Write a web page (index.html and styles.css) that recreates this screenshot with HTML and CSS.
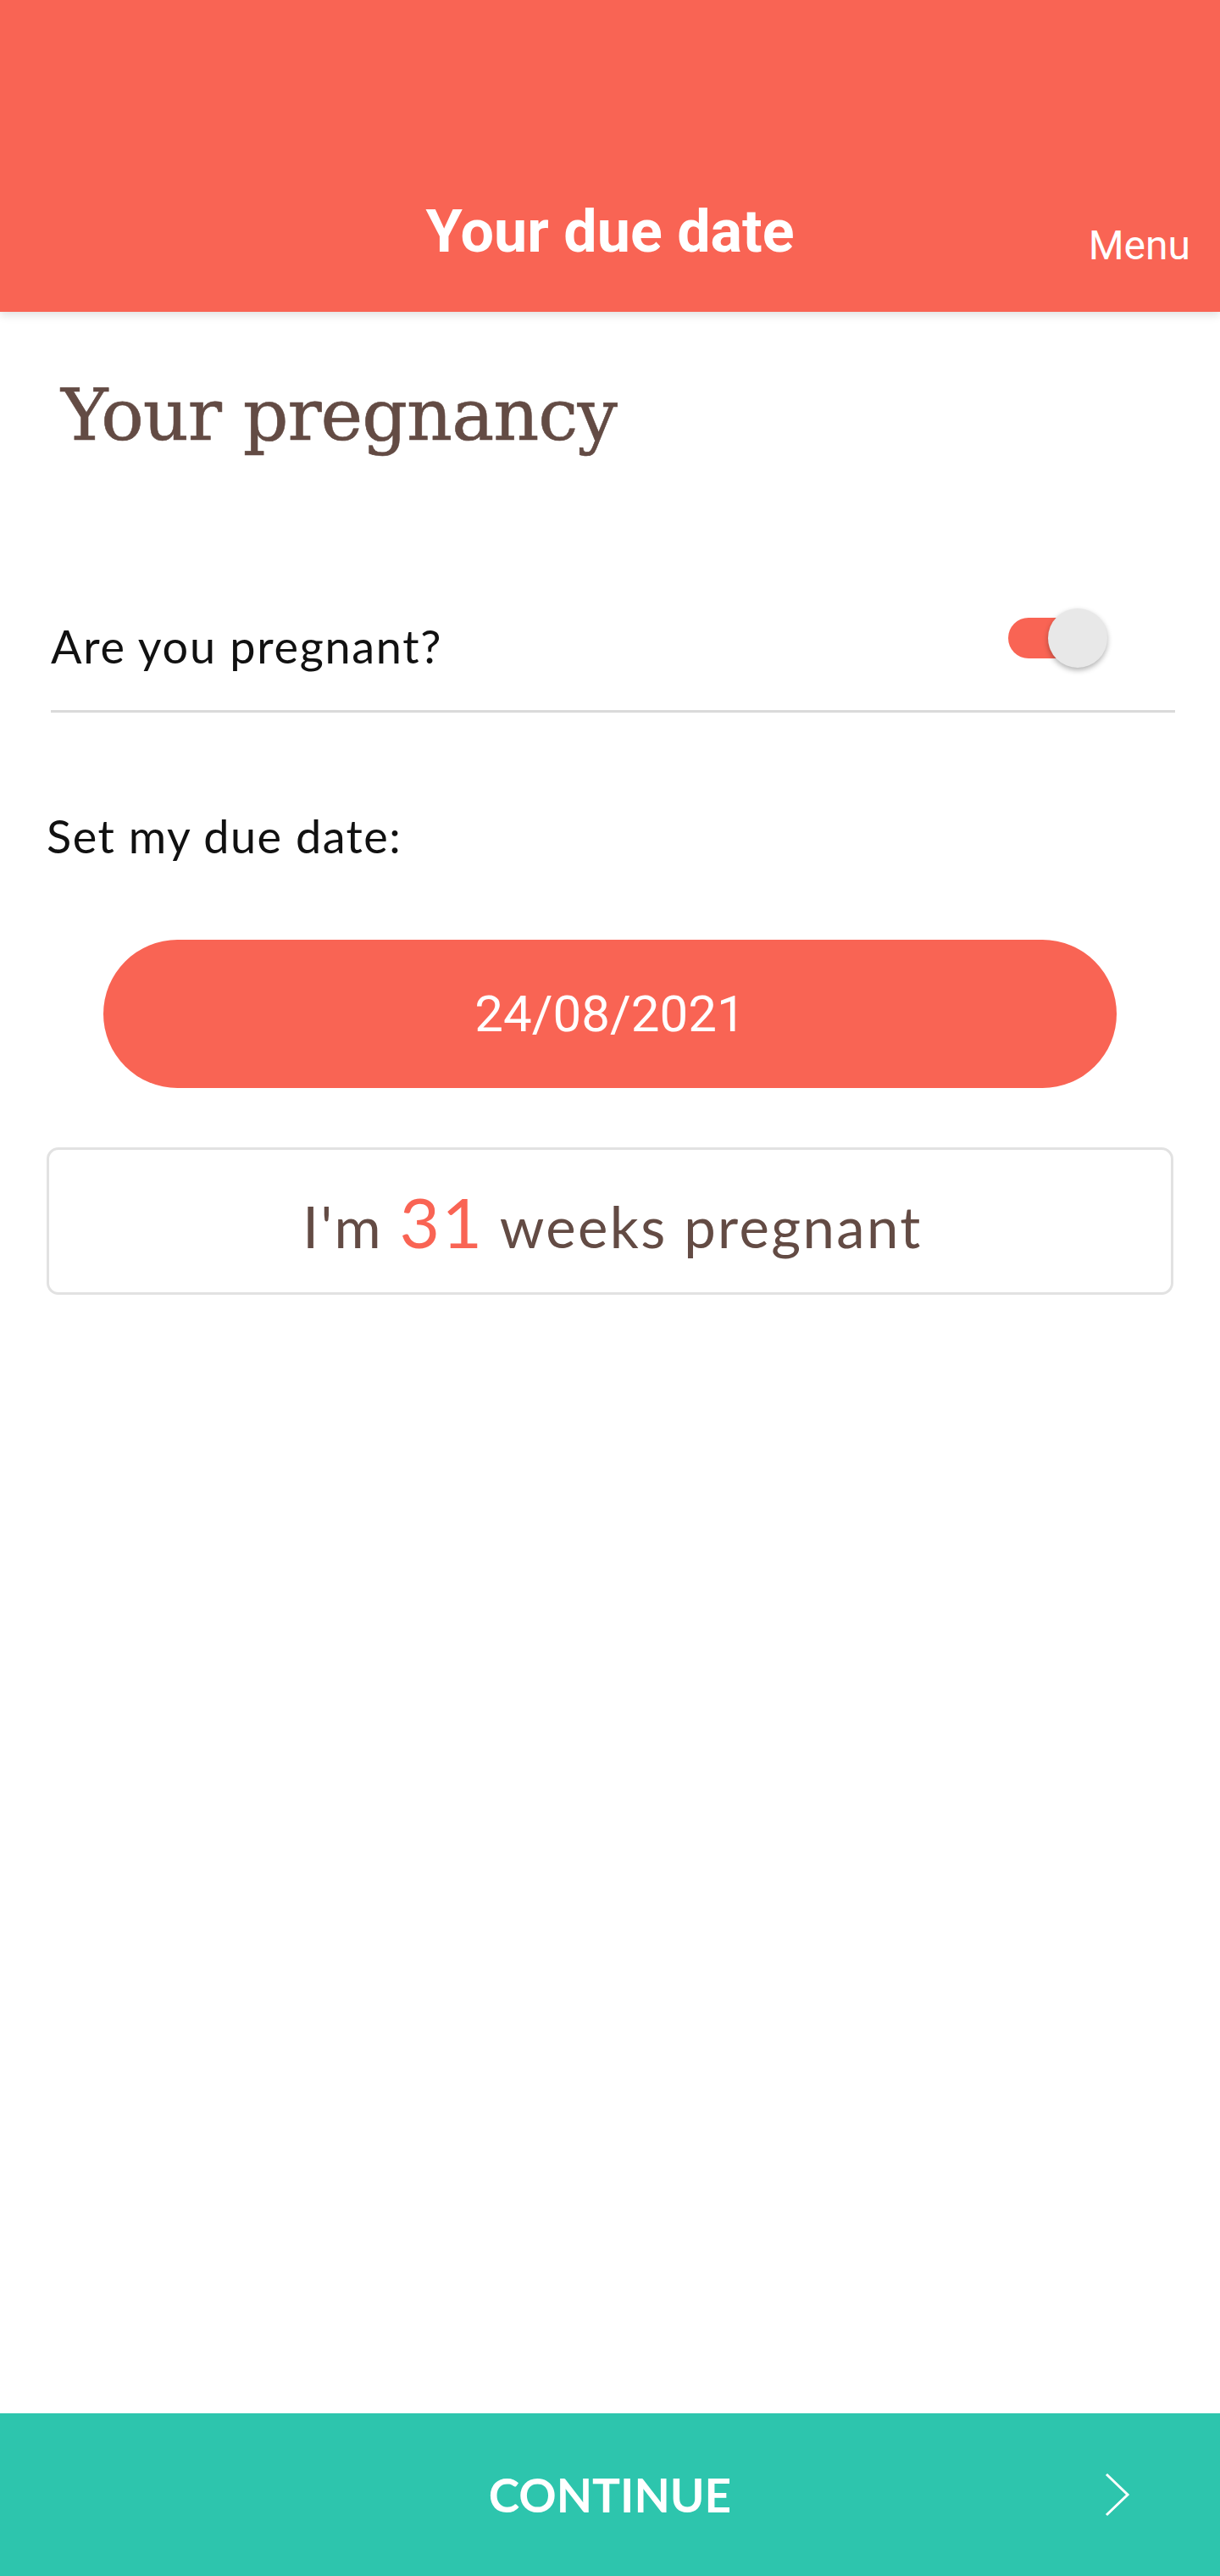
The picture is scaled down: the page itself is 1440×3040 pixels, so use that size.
FILE: index.html
```html
<!DOCTYPE html>
<html lang="en">
<head>
    <meta charset="UTF-8">
    <meta name="viewport" content="width=device-width, initial-scale=1.0">
    <title>Your due date</title>
    <link rel="stylesheet" href="styles.css">
</head>
<body>
    <div class="app">
        <header class="topbar">
            <span></span>
            <h1 class="topbar-title">Your due date</h1>
            <a class="topbar-menu" href="#">Menu</a>
        </header>

        <main class="content">
            <h2 class="page-title">Your pregnancy</h2>

            <div class="toggle-row">
                <span class="toggle-label">Are you pregnant?</span>
                <span class="switch">
                    <span class="switch-track"></span>
                    <span class="switch-thumb"></span>
                </span>
            </div>

            <p class="due-label">Set my due date:</p>

            <button class="date-btn" type="button">24/08/2021</button>

            <div class="weeks-box">
                <p class="weeks-text">I'm <span class="weeks-num">31</span> weeks pregnant</p>
            </div>
        </main>

        <footer class="bottombar">
            <span></span>
            <span class="continue">CONTINUE</span>
            <svg class="chevron" width="30" height="52" viewBox="0 0 30 52">
                <polyline points="2,2 27,26 2,50" fill="none" stroke="#fff" stroke-width="3"/>
            </svg>
        </footer>
    </div>
</body>
</html>
```

FILE: styles.css
```css
body {
    margin: 0;
    background-color: #fff;
    font-family: Lato, "Open Sans", sans-serif;
}
.app {
    display: flex;
    flex-direction: column;
    min-height: 100vh;
}
.topbar {
    display: grid;
    grid-template-columns: 1fr auto 1fr;
    align-items: start;
    height: 368px;
    box-sizing: border-box;
    padding-top: 238px;
    background-color: #f96454;
    box-shadow: 0px 4px 10px rgba(0,0,0,0.12);
    position: relative;
    z-index: 1;
}
.topbar-title {
    margin: 0;
    font-family: Roboto, sans-serif;
    font-weight: bold;
    font-size: 70px;
    line-height: 1;
    color: #fff;
}
.topbar-menu {
    justify-self: end;
    margin: 28px 35px 0 0;
    font-family: Roboto, sans-serif;
    font-size: 48px;
    line-height: 1;
    color: #fff;
    text-decoration: none;
}
.content {
    flex: 1;
    padding: 80px 55px 0 55px;
}
.page-title {
    margin: 0 0 186px 17px;
    font-family: "DejaVu Serif", serif;
    font-weight: normal;
    font-size: 84px;
    line-height: 1;
    letter-spacing: -1px;
    color: #634b44;
    -webkit-text-stroke: 0.6px #634b44;
}
.toggle-row {
    display: flex;
    justify-content: space-between;
    align-items: flex-start;
    margin: 0 -2px 0 5px;
    padding-bottom: 48px;
    border-bottom: 3px solid #dadada;
}
.toggle-label {
    margin-top: 18px;
    font-size: 54px;
    line-height: 1;
    letter-spacing: 1.7px;
    color: #111;
}
.switch {
    display: flex;
    align-items: center;
    margin-right: 80px;
}
.switch-track {
    width: 72px;
    height: 48px;
    border-radius: 24px 0 0 24px;
    background-color: #f96454;
    margin-right: -25px;
}
.switch-thumb {
    width: 70px;
    height: 70px;
    border-radius: 50%;
    background-color: #e8e8e8;
    box-shadow: 0px 3px 6px rgba(0,0,0,0.3);
}
.due-label {
    margin: 119px 0 0 0;
    font-size: 54px;
    line-height: 1;
    letter-spacing: 1.5px;
    color: #111;
}
.date-btn {
    display: block;
    width: 1196px;
    height: 175px;
    margin: 95px auto 0 auto;
    border: none;
    border-radius: 88px;
    background-color: #f96454;
    color: #fff;
    font-family: Roboto, sans-serif;
    font-size: 60px;
    line-height: 1;
    cursor: pointer;
}
.weeks-box {
    display: flex;
    align-items: center;
    justify-content: center;
    height: 174px;
    box-sizing: border-box;
    margin-top: 70px;
    border: 3px solid #e2e2e2;
    border-radius: 14px;
}
.weeks-text {
    margin: 0 0 0 6px;
    font-size: 67px;
    line-height: 1;
    letter-spacing: 2.4px;
    color: #634b44;
}
.weeks-num {
    font-size: 82px;
    color: #f96454;
}
.bottombar {
    display: grid;
    grid-template-columns: 1fr auto 1fr;
    align-items: center;
    height: 192px;
    background-color: #2dc5ad;
}
.continue {
    font-weight: bold;
    font-size: 55px;
    color: #fff;
}
.chevron {
    justify-self: end;
    margin-right: 106px;
}
```
